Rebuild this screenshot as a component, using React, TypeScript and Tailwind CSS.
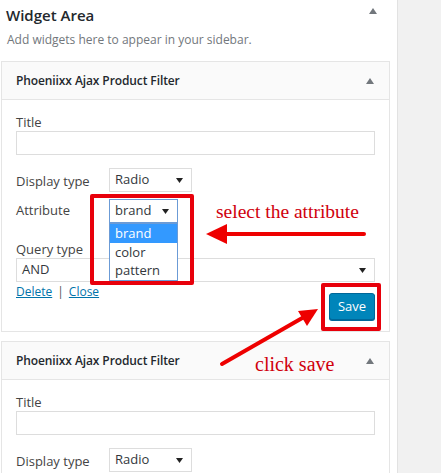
import React from 'react';

const Caret = ({ className = '' }: { className?: string }) => (
  <svg width="8" height="6" viewBox="0 0 8 6" className={className}>
    <path d="M0 6 L4 0 L8 6 Z" fill="#72777c" />
  </svg>
);

const DownTri = () => (
  <svg width="7" height="5" viewBox="0 0 7 5">
    <path d="M0 0 L7 0 L3.5 5 Z" fill="#222" />
  </svg>
);

const Select = ({
  value,
  width,
  focused = false,
}: {
  value: string;
  width: string;
  focused?: boolean;
}) => (
  <div
    className={`${width} h-[24px] flex items-center justify-between pl-[5px] pr-[8px] bg-white border text-[13px] text-[#32373c] ${
      focused ? 'border-[#6b9bd6]' : 'border-[#dddddd]'
    }`}
  >
    <span>{value}</span>
    <DownTri />
  </div>
);

const CardHeader = () => (
  <div className="h-[38px] flex items-center justify-between pl-[14px] pr-[15px] bg-[#fafafa] border-b border-[#e5e5e5]">
    <span className="text-[12px] font-semibold tracking-[-0.1px] text-[#23282d]">Phoeniixx Ajax Product Filter</span>
    <Caret />
  </div>
);

export default function App() {
  return (
    <div className="relative flex w-[441px] h-[473px] overflow-hidden bg-[#f1f1f1] font-['Open_Sans',sans-serif]">
      <div className="w-[398px] shrink-0 bg-white border-r border-[#e2e2e2]">
        {/* Sidebar heading */}
        <div className="flex items-start justify-between pl-[6px] pr-[20px] pt-[4px]">
          <h2 className="text-[15px] leading-[22px] font-semibold text-[#23282d]">Widget Area</h2>
          <Caret className="mt-[4px]" />
        </div>
        <p className="pl-[7px] mt-[5px] text-[12px] leading-[18px] text-[#72777c]">
          Add widgets here to appear in your sidebar.
        </p>

        {/* Widget 1 */}
        <div className="ml-[1px] mt-[12px] w-[389px] border border-[#e5e5e5]">
          <CardHeader />
          <div className="px-[14px] pt-[13px] pb-[11px] text-[13px] text-[#444]">
            <div className="leading-[18px]">Title</div>
            <div className="h-[24px] border border-[#dddddd]" />

            <div className="flex items-center mt-[13px]">
              <span className="w-[93px] pt-[3px]">Display type</span>
              <Select value="Radio" width="w-[83px]" />
            </div>
            <div className="flex items-center mt-[7px]">
              <span className="w-[93px]">Attribute</span>
              <Select value="brand" width="w-[69px]" focused />
            </div>

            <div className="leading-[18px] mt-[17px]">Query type</div>
            <Select value="AND" width="w-full" />

            <div className="flex items-start justify-between mt-[1px]">
              <div className="leading-[18px] text-[12px]">
                <a className="text-[#0073aa] underline">Delete</a>
                <span className="text-[#555] mx-[5px]">|</span>
                <a className="text-[#0073aa] underline">Close</a>
              </div>
              <button className="mt-[10px] h-[27px] w-[46px] rounded-[3px] bg-[#0085ba] border border-[#006799] text-white text-[13px] shadow-[0_1px_0_#006799]">
                Save
              </button>
            </div>
          </div>
        </div>

        {/* Widget 2 */}
        <div className="ml-[1px] mt-[9px] w-[389px] border border-[#e5e5e5]">
          <CardHeader />
          <div className="px-[14px] pt-[13px] pb-[11px] text-[13px] text-[#444]">
            <div className="leading-[18px]">Title</div>
            <div className="h-[24px] border border-[#dddddd]" />
            <div className="flex items-center mt-[13px]">
              <span className="w-[93px] pt-[3px]">Display type</span>
              <Select value="Radio" width="w-[83px]" />
            </div>
          </div>
        </div>
      </div>

      {/* Open dropdown list */}
      <div className="absolute left-[109px] top-[223px] w-[69px] bg-white border border-[#6b9bd6] text-[13px] leading-[18.5px] text-[#32373c]">
        <div className="bg-[#3399ff] text-white pl-[5px]">brand</div>
        <div className="pl-[5px]">color</div>
        <div className="pl-[5px]">pattern</div>
      </div>

      {/* Annotations */}
      <div className="absolute left-[90px] top-[194px] w-[104px] h-[91px] border-[4px] border-[#e8000b] rounded-[2px]" />
      <div className="absolute left-[321px] top-[283px] w-[60px] h-[48px] border-[4px] border-[#e8000b] rounded-[2px]" />

      <div className="absolute left-[216px] top-[199px] text-[19.5px] leading-[26px] text-[#d0000d] font-['Liberation_Serif',serif]">
        select the attribute
      </div>
      <div className="absolute left-[255px] top-[351px] text-[20px] leading-[26px] text-[#d0000d] font-['Liberation_Serif',serif]">
        click save
      </div>

      <svg className="absolute left-0 top-0" width="441" height="473" viewBox="0 0 441 473">
        <line x1="364" y1="234" x2="220" y2="234" stroke="#ee0000" strokeWidth="4" strokeLinecap="round" />
        <path d="M206 234 L227 224 L227 244 Z" fill="#ee0000" />
        <line x1="222" y1="364" x2="304" y2="317" stroke="#ee0000" strokeWidth="4" strokeLinecap="round" />
        <path d="M318 309 L298 311 L307 326 Z" fill="#ee0000" />
      </svg>
    </div>
  );
}
